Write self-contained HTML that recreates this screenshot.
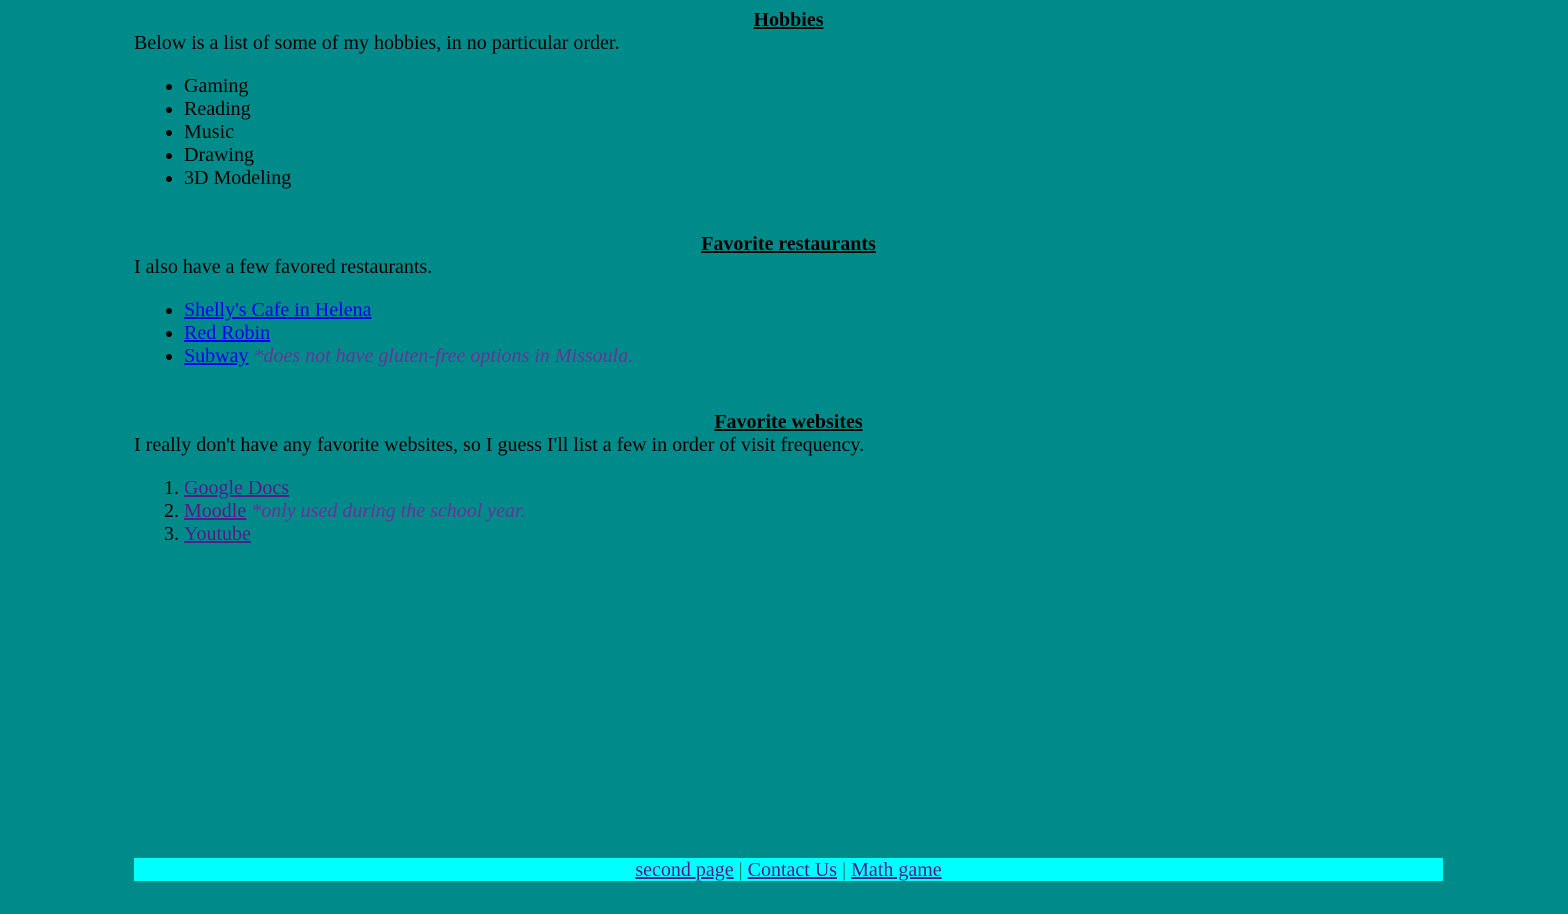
<!DOCTYPE html>
<html><head><meta charset="utf-8"><style>
html,body{margin:0;padding:0}
body{background:#008b8b;font-family:"Liberation Serif",serif;font-size:20px;line-height:23px;color:#000;width:1568px;height:914px;overflow:hidden;position:relative}
.w{position:absolute;left:134px;width:1309px;top:9px}
h2{font-size:20px;margin:0;text-align:center;text-decoration:underline;font-weight:bold;line-height:23px}
p{margin:0}
ul,ol{margin:20px 0 0 0;padding-left:50px}
.gap{height:43px}
a{color:#0000ee;text-decoration:underline}
a.v{color:#551a8b}
i{color:#663399}
.foot{position:absolute;left:134px;width:1309px;top:858px;height:23px;background:#00ffff;text-align:center}
.foot div{position:relative;top:1px}
.foot span{color:#2b6f60}
</style></head><body>
<div class="w">
<h2>Hobbies</h2>
<p>Below is a list of some of my hobbies, in no particular order.</p>
<ul><li>Gaming</li><li>Reading</li><li>Music</li><li>Drawing</li><li>3D Modeling</li></ul>
<div class="gap"></div>
<h2>Favorite restaurants</h2>
<p>I also have a few favored restaurants.</p>
<ul><li><a>Shelly's Cafe in Helena</a></li><li><a>Red Robin</a></li><li><a>Subway</a> <i>*does not have gluten-free options in Missoula.</i></li></ul>
<div class="gap"></div>
<h2>Favorite websites</h2>
<p>I really don't have any favorite websites, so I guess I'll list a few in order of visit frequency.</p>
<ol><li><a class="v">Google Docs</a></li><li><a class="v">Moodle</a> <i>*only used during the school year.</i></li><li><a class="v">Youtube</a></li></ol>
</div>
<div class="foot"><div><a class="v">second page</a> <span>|</span> <a class="v">Contact Us</a> <span>|</span> <a class="v">Math game</a></div></div>
</body></html>
